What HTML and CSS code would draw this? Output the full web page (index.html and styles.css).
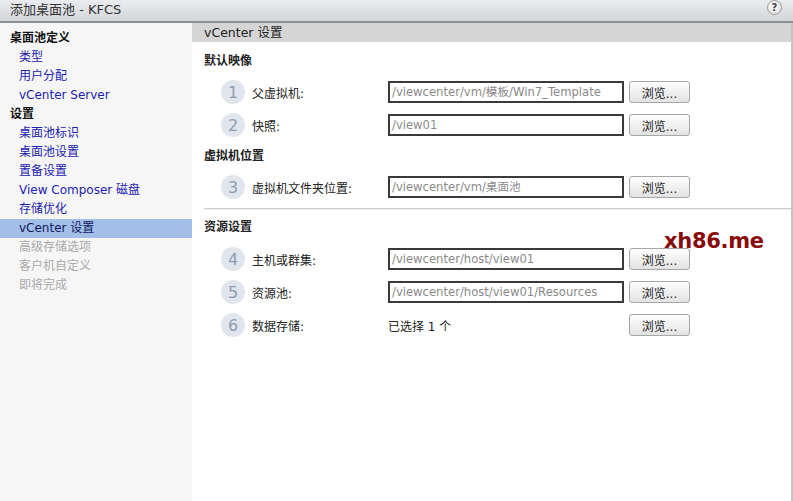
FILE: index.html
```html
<!DOCTYPE html>
<html>
<head>
<meta charset="utf-8">
<link rel="stylesheet" href="styles.css">
</head>
<body>
<div class="window">
  <div class="titlebar">
    <span class="title">添加桌面池 - KFCS</span>
    <span class="help">?</span>
  </div>
  <div class="main">
    <nav class="sidebar">
      <div class="group">桌面池定义</div>
      <div class="item link">类型</div>
      <div class="item link">用户分配</div>
      <div class="item link">vCenter Server</div>
      <div class="group">设置</div>
      <div class="item link">桌面池标识</div>
      <div class="item link">桌面池设置</div>
      <div class="item link">置备设置</div>
      <div class="item link">View Composer 磁盘</div>
      <div class="item link">存储优化</div>
      <div class="item active">vCenter 设置</div>
      <div class="item disabled">高级存储选项</div>
      <div class="item disabled">客户机自定义</div>
      <div class="item disabled">即将完成</div>
    </nav>
    <section class="content">
      <div class="header">vCenter 设置</div>
      <div class="body">
        <div class="section-title first">默认映像</div>
        <div class="row">
          <span class="num">1</span><span class="label">父虚拟机:</span>
          <span class="field">/viewcenter/vm/模板/Win7_Template</span>
          <span class="btn">浏览...</span>
        </div>
        <div class="row">
          <span class="num">2</span><span class="label">快照:</span>
          <span class="field">/view01</span>
          <span class="btn">浏览...</span>
        </div>
        <div class="section-title">虚拟机位置</div>
        <div class="row">
          <span class="num">3</span><span class="label">虚拟机文件夹位置:</span>
          <span class="field">/viewcenter/vm/桌面池</span>
          <span class="btn">浏览...</span>
        </div>
      </div>
      <div class="separator"></div>
      <div class="body">
        <div class="section-title res">资源设置</div>
        <div class="row">
          <span class="num">4</span><span class="label">主机或群集:</span>
          <span class="field">/viewcenter/host/view01</span>
          <span class="btn">浏览...</span>
        </div>
        <div class="row">
          <span class="num">5</span><span class="label">资源池:</span>
          <span class="field">/viewcenter/host/view01/Resources</span>
          <span class="btn">浏览...</span>
        </div>
        <div class="row">
          <span class="num">6</span><span class="label">数据存储:</span>
          <span class="value">已选择 1 个</span>
          <span class="btn">浏览...</span>
        </div>
      </div>
      <div class="watermark">xh86.me</div>
    </section>
  </div>
</div>
</body>
</html>
```
FILE: styles.css
```css
html, body {
  margin: 0;
  padding: 0;
  background: #ffffff;
}
body {
  font-family: "DejaVu Sans", "Noto Sans CJK SC", sans-serif;
  font-size: 12px;
  color: #222;
}
.window {
  width: 793px;
  height: 501px;
  display: flex;
  flex-direction: column;
  overflow: hidden;
}
.titlebar {
  height: 21px;
  flex: none;
  display: flex;
  align-items: center;
  justify-content: space-between;
  padding: 0 11px 0 10px;
  background: linear-gradient(#ebecee, #d3d5d9);
  border-bottom: 2px solid #8d8f93;
}
.title {
  font-size: 13px;
  color: #333;
  margin-top: -5px;
}
.help {
  width: 13px;
  height: 13px;
  border-radius: 50%;
  border: 1px solid #9a9a9a;
  background: radial-gradient(circle at 40% 35%, #ffffff, #d8d8d8);
  font-size: 10px;
  font-weight: bold;
  color: #444;
  display: flex;
  align-items: center;
  justify-content: center;
  margin-top: -6px;
}
.main {
  flex: 1;
  display: flex;
  min-height: 0;
}
.sidebar {
  width: 192px;
  flex: none;
  background: #f6f6f6;
  padding-top: 6px;
}
.group {
  height: 19px;
  line-height: 19px;
  padding-left: 10px;
  font-weight: bold;
  color: #111;
}
.item {
  height: 19px;
  line-height: 19px;
  padding-left: 19px;
}
.link { color: #1c22b0; }
.active {
  background: #a3bee8;
  color: #10185a;
}
.disabled { color: #aaaaaa; }
.content {
  flex: 1;
  position: relative;
  border-right: 2px solid #c4c4c4;
  background: #fff;
}
.header {
  height: 19px;
  line-height: 19px;
  background: #d5d5d5;
  padding-left: 12px;
  color: #222;
  font-size: 12.5px;
}
.body {
  padding-left: 12px;
}
.section-title {
  height: 18px;
  line-height: 18px;
  font-weight: bold;
  color: #222;
  margin-top: 11px;
  margin-bottom: 11px;
}
.section-title.first { margin-top: 10px; }
.section-title.res { margin-top: 8px; margin-bottom: 12px; }
.row {
  height: 22px;
  display: flex;
  align-items: center;
  margin-bottom: 11px;
}
.row:last-child { margin-bottom: 0; }
.num {
  width: 24px;
  height: 24px;
  margin-left: 17px;
  border-radius: 50%;
  background: #e1e6ee;
  color: #8e9cb0;
  font-size: 16px;
  display: flex;
  align-items: center;
  justify-content: center;
  flex: none;
}
.label {
  margin-left: 7px;
  width: 136px;
  flex: none;
  color: #222;
}
.field {
  width: 230px;
  height: 18px;
  line-height: 18px;
  border: 2px solid #3a3a3a;
  padding-left: 2px;
  color: #8a8a8a;
  white-space: nowrap;
  overflow: hidden;
  flex: none;
  font-size: 11.6px;
}
.value {
  width: 236px;
  flex: none;
  color: #222;
}
.btn {
  margin-left: 5px;
  width: 59px;
  height: 20px;
  border: 1px solid #a6a6a6;
  border-radius: 3px;
  background: linear-gradient(#fefefe, #e3e3e3);
  display: flex;
  align-items: center;
  justify-content: center;
  color: #222;
  flex: none;
}
.separator {
  height: 1px;
  background: #cfcfcf;
  border-bottom: 1px solid #ececec;
  margin: 10px 0 0 12px;
}
.watermark {
  position: absolute;
  left: 472px;
  top: 206px;
  font-family: "DejaVu Sans", sans-serif;
  font-weight: bold;
  font-size: 21px;
  color: #8a0b0b;
  letter-spacing: -0.3px;
}
```
